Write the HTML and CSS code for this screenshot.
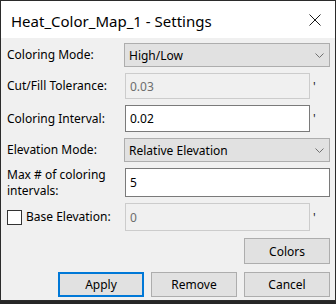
FILE: index.html
```html
<!DOCTYPE html>
<html>
<head>
<meta charset="utf-8">
<link rel="stylesheet" href="styles.css">
</head>
<body>
<div class="window">
  <div class="titlebar">
    <span class="title">Heat_Color_Map_1 - Settings</span>
    <svg class="close" width="12" height="12" viewBox="0 0 12 12"><path d="M0.5 0.5 L11.5 11.5 M11.5 0.5 L0.5 11.5" stroke="#1a1a1a" stroke-width="1" fill="none"/></svg>
  </div>
  <div class="content">
    <div class="form">
      <label class="lbl">Coloring Mode:</label>
      <div class="select span2"><span>High/Low</span><svg class="chev" width="9" height="5" viewBox="0 0 9 5"><path d="M0.5 0.5 L4.5 4.5 L8.5 0.5" stroke="#707070" fill="none"/></svg></div>

      <label class="lbl">Cut/Fill Tolerance:</label>
      <div class="input disabled">0.03</div>
      <span class="tick">'</span>

      <label class="lbl">Coloring Interval:</label>
      <div class="input">0.02</div>
      <span class="tick">'</span>

      <label class="lbl">Elevation Mode:</label>
      <div class="select span2"><span>Relative Elevation</span><svg class="chev" width="9" height="5" viewBox="0 0 9 5"><path d="M0.5 0.5 L4.5 4.5 L8.5 0.5" stroke="#707070" fill="none"/></svg></div>

      <label class="lbl two">Max # of coloring<br>intervals:</label>
      <div class="input span2">5</div>

      <label class="lbl chk"><span class="box"></span>Base Elevation:</label>
      <div class="input disabled">0</div>
      <span class="tick">'</span>
    </div>
    <div class="btnrow first"><button class="btn">Colors</button></div>
    <div class="btnrow"><button class="btn primary">Apply</button><button class="btn">Remove</button><button class="btn">Cancel</button></div>
  </div>
</div>
</body>
</html>
```
FILE: styles.css
```css
html, body { margin: 0; padding: 0; }
body { background: #262626; width: 336px; height: 304px; overflow: hidden; font-family: "Noto Sans", "Open Sans", sans-serif; }
.window { width: 336px; height: 301px; box-sizing: border-box; border: 1px solid #2b2b2b; background: #f0f0f0; display: flex; flex-direction: column; }
.titlebar { height: 37px; background: #ffffff; display: flex; align-items: center; justify-content: space-between; padding: 0 14px 0 10px; flex: none; }
.title { font-size: 15px; color: #000; position: relative; top: 1px; }
.close { display: block; margin-top: 1px; }
.content { flex: 1; padding: 5px 5px 0 6px; }
.form { display: grid; grid-template-columns: 117px 1fr 20px; grid-template-rows: 24px 26px 27px 24px 29px 28px; row-gap: 6px; align-items: center; }
.lbl { font-size: 12px; color: #000; line-height: 16px; }
.lbl.chk { display: flex; align-items: center; gap: 4px; }
.box { width: 13px; height: 13px; border: 1px solid #333; background: #fff; display: inline-block; }
.select { box-sizing: border-box; height: 24px; background: #e1e1e1; border: 1px solid #adadad; display: flex; align-items: center; justify-content: space-between; padding: 0 4px 0 4px; font-size: 12px; color: #000; }
.span2 { grid-column: 2 / 4; }
.chev { margin-right: 1px; }
.input { box-sizing: border-box; height: 100%; background: #fff; border: 1px solid #7a7a7a; display: flex; align-items: center; padding: 0 4px; font-size: 12px; color: #000; margin-left: 1px; }
.input.disabled { background: #f0f0f0; border-color: #cccccc; color: #6d6d6d; }
.tick { font-size: 12px; color: #222; padding-left: 3px; }
.btnrow { display: flex; justify-content: flex-end; gap: 7px; margin-top: 8px; }
.btnrow.first { margin-top: 7px; }
.btn { box-sizing: border-box; width: 86px; height: 26px; background: #e1e1e1; border: 1px solid #adadad; font-family: "Noto Sans", "Open Sans", sans-serif; font-size: 12px; color: #000; padding: 0; margin: 0; }
.btnrow:last-child .btn { height: 25px; }
.btn.primary { border: 2px solid #0078d7; }
```
